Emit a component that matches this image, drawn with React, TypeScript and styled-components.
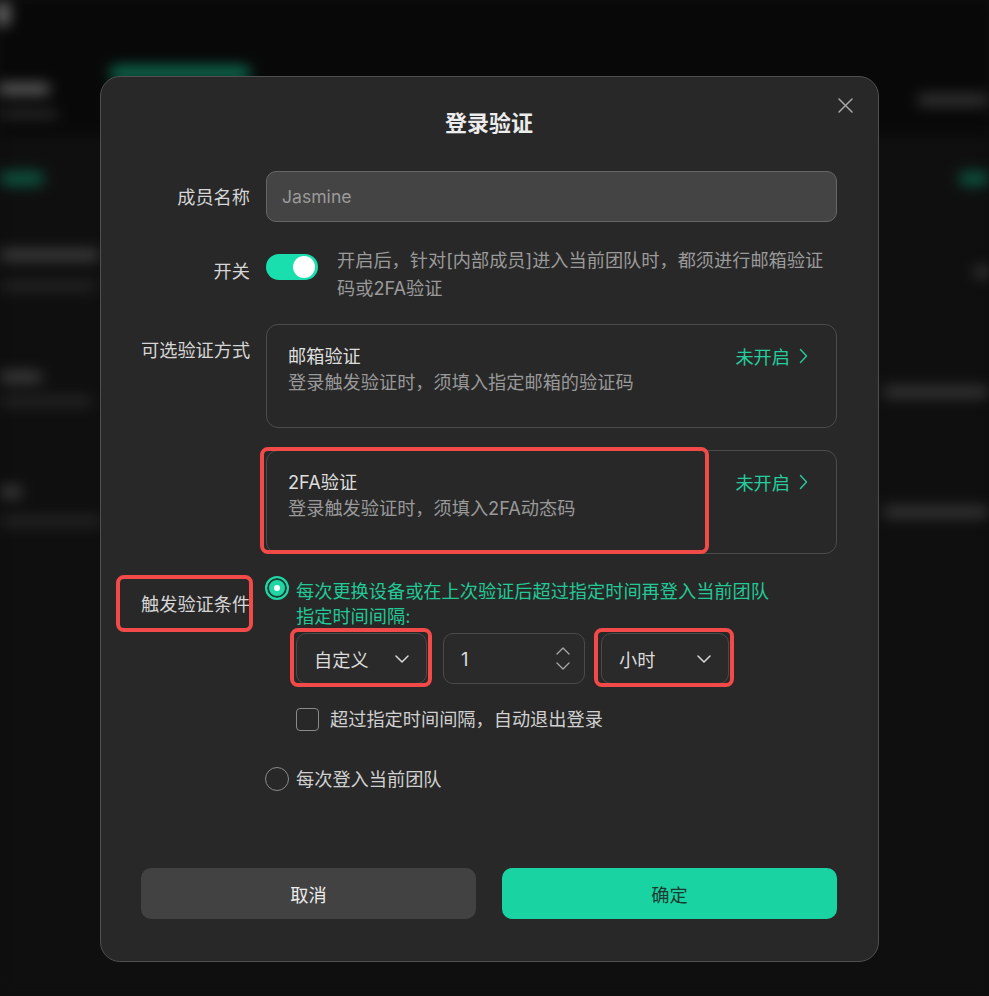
import React from "react";
import styled, { createGlobalStyle } from "styled-components";

const Global = createGlobalStyle`
  html, body { margin: 0; padding: 0; background: #0d0d0d; overflow: hidden; }
  * { box-sizing: border-box; }
  body { font-family: "Inter", "Noto Sans CJK SC", "Noto Sans", sans-serif; }
`;

const FS = "18.2px";

const Page = styled.div`
  position: relative;
  width: 989px;
  height: 996px;
  overflow: hidden;
  background: #0e0e0e;
`;

/* ---------- blurred page behind the dialog ---------- */
const Backdrop = styled.div`
  position: absolute;
  inset: 0;
  display: grid;
  grid-template-columns: 110px 1fr 110px;
  filter: blur(7px);
  background: linear-gradient(#080808 0, #080808 135px, #0f0f0f 135px);
`;
const BgCol = styled.div<{ $align?: string }>`
  display: flex;
  flex-direction: column;
  align-items: ${(p) => p.$align || "flex-start"};
`;
const Blob = styled.div<{ $w: number; $h: number; $c: string; $mt: number; $ml?: number }>`
  width: ${(p) => p.$w}px;
  height: ${(p) => p.$h}px;
  margin-top: ${(p) => p.$mt}px;
  margin-left: ${(p) => p.$ml || 0}px;
  background: ${(p) => p.$c};
  border-radius: 6px;
  flex-shrink: 0;
`;

/* ---------- dialog ---------- */
const Dialog = styled.div`
  position: absolute;
  left: 100px;
  top: 76px;
  width: 779px;
  height: 886px;
  background: #282828;
  border: 1px solid #4f4f4f;
  border-radius: 20px;
  padding: 31px 41px 0 40px;
  display: flex;
  flex-direction: column;
  color: #d8d8d8;
`;
const CloseBtn = styled.button`
  position: absolute;
  right: 23px;
  top: 18px;
  width: 20px;
  height: 20px;
  padding: 0;
  border: 0;
  background: transparent;
  display: flex;
  align-items: center;
  justify-content: center;
  color: #a8a8a8;
`;
const Title = styled.h2`
  margin: 0 0 33px;
  font-size: 22px;
  line-height: 30px;
  font-weight: 600;
  text-align: center;
  color: #ececec;
`;
const Row = styled.div<{ $mt?: number }>`
  display: flex;
  align-items: flex-start;
  gap: 16px;
  margin-top: ${(p) => p.$mt || 0}px;
`;
const Label = styled.div<{ $mt?: number }>`
  position: relative;
  width: 109px;
  flex-shrink: 0;
  text-align: right;
  font-size: ${FS};
  line-height: 26px;
  color: #d6d6d6;
  white-space: nowrap;
  margin-top: ${(p) => p.$mt || 0}px;
`;
const Content = styled.div`
  flex: 1;
  min-width: 0;
  display: flex;
  flex-direction: column;
`;
const TextInput = styled.div`
  height: 51px;
  border-radius: 10px;
  background: #444444;
  border: 1px solid #666;
  display: flex;
  align-items: center;
  padding: 0 15px;
  font-size: 17.6px;
  color: #9a9a9a;
`;
const SwitchRow = styled.div`
  display: flex;
  align-items: flex-start;
  gap: 19px;
`;
const Switch = styled.div`
  width: 52px;
  height: 26px;
  margin-top: 8px;
  border-radius: 13px;
  background: #18dfad;
  flex-shrink: 0;
  display: flex;
  justify-content: flex-end;
  align-items: center;
  padding: 0 3px;
`;
const Knob = styled.div`
  width: 22px;
  height: 22px;
  border-radius: 50%;
  background: #ffffff;
`;
const Hint = styled.div`
  font-size: ${FS};
  line-height: 28px;
  color: #9a9a9a;
`;
const Card = styled.div<{ $mt?: number }>`
  position: relative;
  height: 104px;
  border: 1px solid #4c4c4c;
  border-radius: 12px;
  padding: 18px 28px 0 21px;
  display: flex;
  justify-content: space-between;
  margin-top: ${(p) => p.$mt || 0}px;
`;
const CardTitle = styled.div`
  font-size: ${FS};
  line-height: 26px;
  color: #dedede;
`;
const CardDesc = styled.div`
  font-size: ${FS};
  line-height: 26px;
  color: #999;
`;
const Status = styled.div`
  display: flex;
  align-items: center;
  gap: 9px;
  height: 26px;
  font-size: ${FS};
  color: #25cc9c;
`;
const Mark = styled.span<{ $l: number; $t: number; $r: number; $b: number; $w?: number }>`
  position: absolute;
  left: ${(p) => p.$l}px;
  top: ${(p) => p.$t}px;
  ${(p) => (p.$w ? `width: ${p.$w}px;` : `right: ${p.$r}px;`)}
  bottom: ${(p) => p.$b}px;
  border: 4px solid #f24a48;
  border-radius: 8px;
  pointer-events: none;
`;
const Option = styled.div<{ $mt?: number }>`
  display: flex;
  align-items: flex-start;
  gap: 7px;
  margin-left: -1px;
  margin-top: ${(p) => p.$mt || 0}px;
`;
const Radio = styled.div<{ $on?: boolean }>`
  width: 24px;
  height: 24px;
  border-radius: 50%;
  flex-shrink: 0;
  display: flex;
  align-items: center;
  justify-content: center;
  ${(p) =>
    p.$on
      ? `background: #1fd6a5; border: 2px solid #1fd6a5; box-shadow: inset 0 0 0 2px #1e3a32;`
      : `background: transparent; border: 1.5px solid #8a8a8a;`}
`;
const Dot = styled.div`
  width: 6px;
  height: 6px;
  border-radius: 50%;
  background: #ffffff;
`;
const OptionBody = styled.div`
  display: flex;
  flex-direction: column;
`;
const GreenText = styled.div`
  margin-top: 3px;
  font-size: ${FS};
  line-height: 25px;
  color: #22c896;
`;
const PlainText = styled.div`
  font-size: ${FS};
  line-height: 24px;
  color: #d0d0d0;
`;
const Controls = styled.div`
  display: flex;
  gap: 16px;
  margin-top: 4px;
`;
const Field = styled.div<{ $w: number }>`
  position: relative;
  width: ${(p) => p.$w}px;
  height: 51px;
  border: 1px solid #4a4a4a;
  border-radius: 10px;
  background: #2a2a2a;
  display: flex;
  align-items: center;
  justify-content: space-between;
  padding: 0 17px 0 17px;
  font-size: ${FS};
  color: #dcdcdc;
`;
const Spinner = styled.div`
  display: flex;
  flex-direction: column;
  gap: 7px;
  margin-right: -3px;
`;
const CheckRow = styled.div`
  display: flex;
  align-items: center;
  gap: 11px;
  margin-top: 23px;
`;
const Checkbox = styled.div`
  width: 23px;
  height: 23px;
  border: 1.5px solid #8a8a8a;
  border-radius: 4px;
`;
const Footer = styled.div`
  display: flex;
  gap: 26px;
  margin-top: 77px;
`;
const Btn = styled.button<{ $primary?: boolean }>`
  flex: 1;
  height: 51px;
  border: 0;
  border-radius: 10px;
  font-family: inherit;
  font-size: ${FS};
  background: ${(p) => (p.$primary ? "#19d3a2" : "#424242")};
  color: ${(p) => (p.$primary ? "#1a3a31" : "#ececec")};
`;

const ChevronRight = () => (
  <svg width="9" height="16" viewBox="0 0 9 16" fill="none">
    <path d="M1.5 1.5 L7.5 8 L1.5 14.5" stroke="#25cc9c" strokeWidth="1.4" strokeLinecap="round" strokeLinejoin="round" />
  </svg>
);
const ChevronDown = () => (
  <svg width="14" height="8" viewBox="0 0 14 8" fill="none">
    <path d="M1 1 L7 7 L13 1" stroke="#d8d8d8" strokeWidth="1.5" strokeLinecap="round" strokeLinejoin="round" />
  </svg>
);
const SpinUp = () => (
  <svg width="14" height="8" viewBox="0 0 14 8" fill="none">
    <path d="M1 7 L7 1 L13 7" stroke="#a8a8a8" strokeWidth="1.3" strokeLinecap="round" strokeLinejoin="round" />
  </svg>
);
const SpinDown = () => (
  <svg width="14" height="8" viewBox="0 0 14 8" fill="none">
    <path d="M1 1 L7 7 L13 1" stroke="#a8a8a8" strokeWidth="1.3" strokeLinecap="round" strokeLinejoin="round" />
  </svg>
);

export default function App() {
  return (
    <Page>
      <Global />
      <Backdrop>
        <BgCol>
          <Blob $w={14} $h={24} $c="#6a6a6a" $mt={2} $ml={-4} />
          <Blob $w={52} $h={10} $c="#6a6a6a" $mt={58} $ml={-2} />
          <Blob $w={58} $h={8} $c="#2e2e2e" $mt={16} />
          <Blob $w={44} $h={13} $c="#0c5a42" $mt={54} />
          <Blob $w={100} $h={10} $c="#444" $mt={65} />
          <Blob $w={96} $h={8} $c="#2a2a2a" $mt={22} />
          <Blob $w={42} $h={10} $c="#444" $mt={82} />
          <Blob $w={92} $h={8} $c="#2a2a2a" $mt={15} />
          <Blob $w={22} $h={10} $c="#444" $mt={82} />
          <Blob $w={102} $h={8} $c="#2a2a2a" $mt={20} />
        </BgCol>
        <BgCol>
          <Blob $w={140} $h={14} $c="#0d6f52" $mt={66} $ml={0} />
        </BgCol>
        <BgCol $align="flex-end">
          <Blob $w={72} $h={12} $c="#333" $mt={94} $ml={0} />
          <Blob $w={30} $h={13} $c="#0c5a42" $mt={66} />
          <Blob $w={14} $h={10} $c="#444" $mt={82} />
          <Blob $w={106} $h={10} $c="#3a3a3a" $mt={110} />
          <Blob $w={106} $h={10} $c="#3a3a3a" $mt={110} />
        </BgCol>
      </Backdrop>

      <Dialog>
        <CloseBtn aria-label="关闭">
          <svg width="15" height="15" viewBox="0 0 15 15" fill="none">
            <path d="M1 1 L14 14 M14 1 L1 14" stroke="#a8a8a8" strokeWidth="1.5" strokeLinecap="round" />
          </svg>
        </CloseBtn>
        <Title>登录验证</Title>

        <Row>
          <Label $mt={13}>成员名称</Label>
          <Content>
            <TextInput>Jasmine</TextInput>
          </Content>
        </Row>

        <Row $mt={24}>
          <Label $mt={12}>开关</Label>
          <Content>
            <SwitchRow>
              <Switch>
                <Knob />
              </Switch>
              <Hint>
                开启后，针对[内部成员]进入当前团队时，都须进行邮箱验证
                <br />
                码或2FA验证
              </Hint>
            </SwitchRow>
          </Content>
        </Row>

        <Row $mt={22}>
          <Label $mt={13}>可选验证方式</Label>
          <Content>
            <Card>
              <div>
                <CardTitle>邮箱验证</CardTitle>
                <CardDesc>登录触发验证时，须填入指定邮箱的验证码</CardDesc>
              </div>
              <Status>
                未开启
                <ChevronRight />
              </Status>
            </Card>
            <Card $mt={22}>
              <div>
                <CardTitle>2FA验证</CardTitle>
                <CardDesc>登录触发验证时，须填入2FA动态码</CardDesc>
              </div>
              <Status>
                未开启
                <ChevronRight />
              </Status>
              <Mark $l={-7} $t={-4} $r={0} $b={-1} $w={449} />
            </Card>
          </Content>
        </Row>

        <Row $mt={22}>
          <Label $mt={15}>
            触发验证条件
            <Mark $l={-25} $t={-16} $r={-3} $b={-15} />
          </Label>
          <Content>
            <Option>
              <Radio $on>
                <Dot />
              </Radio>
              <OptionBody>
                <GreenText>
                  每次更换设备或在上次验证后超过指定时间再登入当前团队
                  <br />
                  指定时间间隔:
                </GreenText>
                <Controls>
                  <Field $w={131}>
                    自定义
                    <ChevronDown />
                    <Mark $l={-7} $t={-6} $r={-6} $b={-4} />
                  </Field>
                  <Field $w={142}>
                    1
                    <Spinner>
                      <SpinUp />
                      <SpinDown />
                    </Spinner>
                  </Field>
                  <Field $w={128}>
                    小时
                    <ChevronDown />
                    <Mark $l={-8} $t={-6} $r={-6} $b={-4} />
                  </Field>
                </Controls>
                <CheckRow>
                  <Checkbox />
                  <PlainText>超过指定时间间隔，自动退出登录</PlainText>
                </CheckRow>
              </OptionBody>
            </Option>
            <Option $mt={36}>
              <Radio />
              <PlainText>每次登入当前团队</PlainText>
            </Option>
          </Content>
        </Row>

        <Footer>
          <Btn>取消</Btn>
          <Btn $primary>确定</Btn>
        </Footer>
      </Dialog>
    </Page>
  );
}
